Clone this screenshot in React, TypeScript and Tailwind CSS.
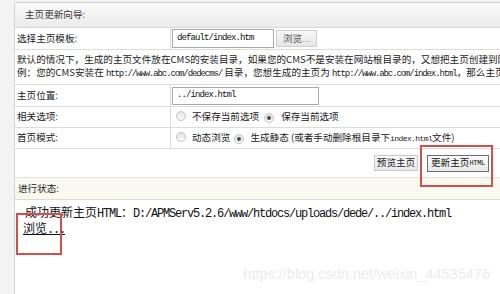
import React from "react";

const CJK = '"Noto Sans CJK SC", "Noto Sans", sans-serif';
const MONO = '"Liberation Mono", "Noto Sans CJK SC", monospace';

function Radio({ checked }: { checked?: boolean }) {
  return (
    <span className="inline-flex h-[10px] w-[10px] items-center justify-center rounded-full border border-[#c4c4c4] bg-gradient-to-b from-[#e4e4e4] to-[#fafafa]">
      {checked && <span className="h-[4px] w-[4px] rounded-full bg-[#4a4a4a]" />}
    </span>
  );
}

function Row({
  label,
  children,
  className,
}: {
  label: string;
  children: React.ReactNode;
  className?: string;
}) {
  return (
    <div className={`flex border-b border-[#dcdcdc] ${className ?? ""}`}>
      <div className="flex w-[156px] shrink-0 items-center border-r border-[#dcdcdc] pl-[2px] text-[#222]">
        {label}
      </div>
      <div className="flex flex-1 items-center pl-[1px]">{children}</div>
    </div>
  );
}

export default function App() {
  return (
    <div
      className="relative h-[294px] w-[500px] overflow-hidden bg-[#f3f3f3] pl-[14px] pt-[2px] text-[9.6px] leading-none"
      style={{ fontFamily: CJK }}
    >
      <div className="flex h-full flex-col border-l border-t border-[#d4d4d4] bg-white">
        {/* header */}
        <div className="flex h-[25px] shrink-0 items-center border-b border-[#d8d8d8] bg-gradient-to-b from-[#fafafa] to-[#ebebeb] pl-[10px] text-[#3a3a3a]">
          主页更新向导:
        </div>

        <Row label="选择主页模板:" className="h-[22px]">
          <div
            className="flex h-[19px] w-[102px] items-center border border-[#a9a9a9] pl-[4px] text-[9px] tracking-[-0.9px] text-[#111]"
            style={{ fontFamily: MONO }}
          >
            default/index.htm
          </div>
          <button className="ml-[2px] flex h-[17px] w-[41px] items-center justify-center border border-[#d0d0d0] bg-gradient-to-b from-[#f7f7f7] to-[#e6e6e6] text-[#555]">
            浏览<span className="text-[#aaa]">...</span>
          </button>
        </Row>

        {/* description */}
        <div className="flex h-[35px] shrink-0 flex-col justify-center gap-[3.5px] overflow-hidden whitespace-nowrap border-b border-[#dcdcdc] pl-[2px] text-[#222]">
          <div>
            默认的情况下，生成的主页文件放在CMS的安装目录，如果您的CMS不是安装在网站根目录的，又想把主页创建到网站根目
          </div>
          <div>
            例：您的CMS安装在{" "}
            <span className="text-[9px] tracking-[-1.1px]" style={{ fontFamily: MONO }}>
              http://www.abc.com/dedecms/
            </span>{" "}
            目录，您想生成的主页为{" "}
            <span className="text-[9px] tracking-[-1.1px]" style={{ fontFamily: MONO }}>
              http://www.abc.com/index.html
            </span>
            ，那么主页
          </div>
        </div>

        <Row label="主页位置:" className="h-[22px]">
          <div
            className="flex h-[18px] w-[147px] items-center border border-[#a9a9a9] pl-[4px] text-[9px] tracking-[-0.9px] text-[#111]"
            style={{ fontFamily: MONO }}
          >
            ../index.html
          </div>
        </Row>

        <Row label="相关选项:" className="h-[21px]">
          <span className="ml-[4px]">
            <Radio />
          </span>
          <span className="ml-[6px] text-[#222]">不保存当前选项</span>
          <span className="ml-[5px]">
            <Radio checked />
          </span>
          <span className="ml-[7px] text-[#222]">保存当前选项</span>
        </Row>

        <Row label="首页模式:" className="h-[21px]">
          <span className="ml-[4px]">
            <Radio />
          </span>
          <span className="ml-[6px] text-[#222]">动态浏览</span>
          <span className="ml-[4px]">
            <Radio checked />
          </span>
          <span className="ml-[6px] whitespace-nowrap text-[#222]">
            生成静态 (或者手动删除根目录下
            <span className="text-[8px] tracking-[-0.6px]" style={{ fontFamily: MONO }}>
              index.html
            </span>
            文件)
          </span>
        </Row>

        {/* actions */}
        <div className="flex h-[29px] shrink-0 items-center justify-end gap-[9px] border-b border-[#e2e2d6] pr-[11px]">
          <button className="flex h-[16px] w-[44px] items-center justify-center border border-[#c8c8c8] bg-gradient-to-b from-[#fbfbfb] to-[#e8e8e8] text-[#222]">
            预览主页
          </button>
          <button className="flex h-[17px] w-[62px] items-center justify-center border border-[#6d6d6d] bg-gradient-to-b from-[#fbfbfb] to-[#e8e8e8] text-[#111]">
            更新主页
            <span className="text-[7px] tracking-[-0.3px]" style={{ fontFamily: MONO }}>
              HTML
            </span>
          </button>
        </div>

        {/* status header */}
        <div className="flex h-[22px] shrink-0 items-center border-b border-[#dcdcd0] bg-[#f9f9ef] pl-[3px] text-[#222]">
          进行状态:
        </div>

        {/* status body */}
        <div className="flex flex-col gap-[2px] pl-[10px] pt-[6px] text-[12px] text-[#111]">
          <div className="whitespace-nowrap">
            成功更新主页
            <span className="tracking-[-1.2px]" style={{ fontFamily: MONO }}>
              HTML
            </span>
            ：
            <span className="tracking-[-1.2px]" style={{ fontFamily: MONO }}>
              D:/APMServ5.2.6/www/htdocs/uploads/dede/../index.html
            </span>
          </div>
          <div className="-ml-[2px]">
            <span className="underline">
              浏览
              <span className="tracking-[-1.2px]" style={{ fontFamily: MONO }}>
                ...
              </span>
            </span>
          </div>
        </div>
      </div>

      {/* annotation boxes */}
      <div className="absolute left-[420px] top-[145px] h-[42px] w-[73px] border-2 border-[#d0504c]" />
      <div className="absolute left-[16px] top-[213px] h-[42px] w-[46px] border-2 border-[#d0504c]" />

      {/* watermark */}
      <div
        className="absolute right-[10px] top-[267px] text-[14.5px] text-[#ececec]"
        style={{ fontFamily: '"Liberation Sans", Arial, sans-serif' }}
      >
        https://blog.csdn.net/weixin_44535476
      </div>
    </div>
  );
}
